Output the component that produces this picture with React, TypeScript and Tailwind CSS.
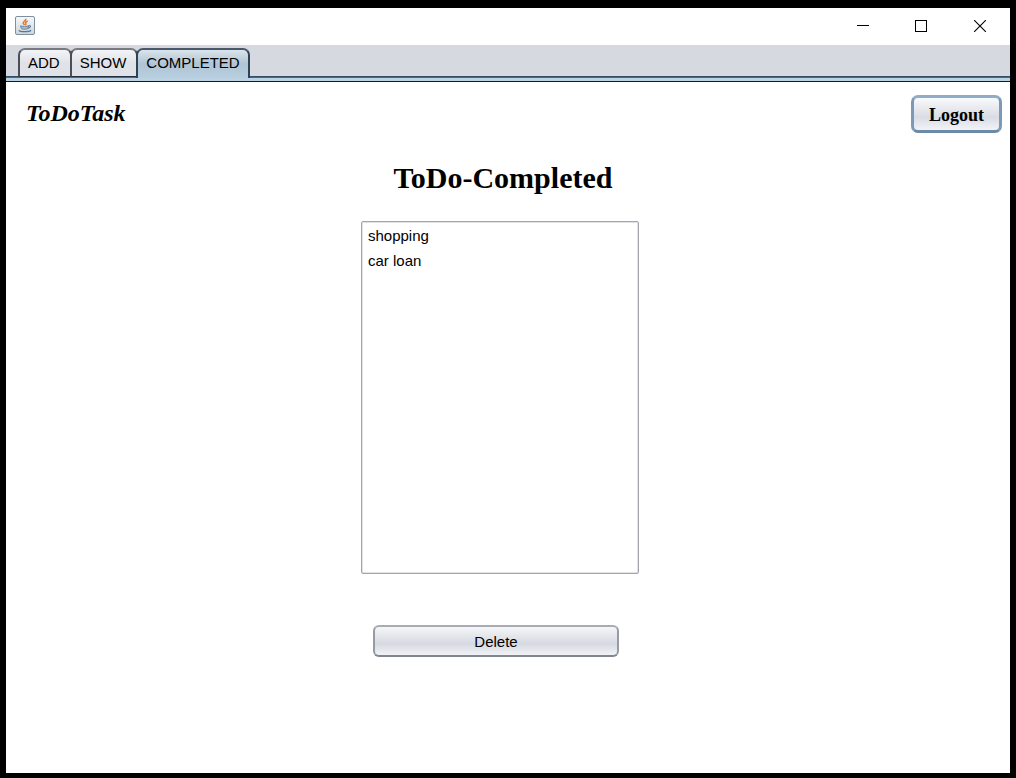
import { useState } from "react";

const tabs = ["ADD", "SHOW", "COMPLETED"];
const tasks = ["shopping", "car loan"];

function JavaIcon() {
  return (
    <svg width="20" height="19" viewBox="0 0 20 19" aria-hidden="true">
      <defs>
        <linearGradient id="tile" x1="0" y1="0" x2="0" y2="1">
          <stop offset="0" stopColor="#f7f8fa" />
          <stop offset="1" stopColor="#cfd5db" />
        </linearGradient>
      </defs>
      <rect x="0.5" y="0.5" width="19" height="18" rx="1.5" fill="url(#tile)" stroke="#7d909f" />
      <path d="M10.8 2.8c.8 1.9-3.4 2.8-2.6 4.6.3.7 1.2 1.1 1.3 1.6M12.8 5c-1.8.7-2.8 1.5-2.1 2.5.4.6.3 1.1-.3 1.6" fill="none" stroke="#e8782a" strokeWidth="1.5" />
      <path d="M5.5 9.8c1 .8 7 .8 8.2 0l-.8 2.8c-1.3.9-5.3.9-6.6 0z" fill="#a9bccd" stroke="#54799b" strokeWidth="0.8" />
      <path d="M13.5 9.5c2.8-.4 2.5 2.2-.5 2.8" fill="none" stroke="#54799b" strokeWidth="1.1" />
      <path d="M3.8 14.3c1.4 1.8 10.4 1.8 12.3 0" fill="none" stroke="#54799b" strokeWidth="1.3" />
    </svg>
  );
}

export default function App() {
  const [active, setActive] = useState("COMPLETED");

  return (
    <div className="min-h-screen flex flex-col bg-black px-[6px] pt-2 pb-[5px] text-[15px] leading-5 text-black font-['Liberation_Sans',Arial,sans-serif]">
      <header className="h-[37px] flex items-center justify-between bg-white pl-[9px] pb-[2px]">
        <JavaIcon />
        <div className="flex self-stretch pr-[1px]">
          <button aria-label="Minimize" className="w-[59px] flex items-center justify-center">
            <svg width="12" height="12" viewBox="0 0 12 12" shapeRendering="crispEdges">
              <path d="M0 5.5H12" stroke="#000" />
            </svg>
          </button>
          <button aria-label="Maximize" className="w-[58px] flex items-center justify-center">
            <svg width="12" height="12" viewBox="0 0 12 12" shapeRendering="crispEdges">
              <rect x="0.5" y="0.5" width="11" height="11" fill="none" stroke="#000" />
            </svg>
          </button>
          <button aria-label="Close" className="w-[59px] flex items-center justify-center">
            <svg width="12" height="12" viewBox="0 0 12 12">
              <path d="M0 0L12 12M12 0L0 12" stroke="#000" strokeWidth="1.1" />
            </svg>
          </button>
        </div>
      </header>

      <nav role="tablist" className="flex bg-[#d6d9e0] pl-3 pt-[3px] bg-[linear-gradient(#23415a,#5f7285)] bg-[length:100%_2px] bg-bottom bg-no-repeat">
        {tabs.map((tab) => (
          <button
            key={tab}
            role="tab"
            aria-selected={active === tab}
            onClick={() => setActive(tab)}
            className={
              active === tab
                ? "h-[30px] -mr-[2px] rounded-t-[7px] border-2 border-b-0 border-[#2c4255] border-t-[#46586a] bg-linear-to-b from-[#dbe4eb] via-[#afc4d4] to-[#b8cfe0] px-2 pb-[2px]"
                : "h-[29px] -mr-[2px] rounded-t-[7px] border-2 border-b border-[#4a4e57] border-t-[#777a82] border-b-[#23303c] bg-linear-to-b from-[#f3f4f7] via-[#e0e2e8] to-[#dfe2e9] pl-2 pr-[10px]"
            }
          >
            {tab}
          </button>
        ))}
      </nav>
      <div className="h-1 bg-[#bbd2e4] border-b border-[#0c1c2c]" />

      <main className="grow bg-white pb-10">
        <div className="flex items-start justify-between pl-5 pr-2 pt-[13px]">
          <h2 className="pt-1 text-[24px] leading-7 font-bold italic font-['Liberation_Serif','Times_New_Roman',serif]">
            ToDoTask
          </h2>
          <button className="h-[38px] w-[91px] rounded-[7px] border-3 border-[#7b9ab8] border-t-[#8eadc9] border-b-[#6c89a5] bg-linear-to-b from-[#fafafc] via-[#d9dce4] via-60% to-[#f1f3f8] pt-[2px] text-[18px] leading-6 font-bold font-['Liberation_Serif','Times_New_Roman',serif]">
            Logout
          </button>
        </div>

        <section className="flex flex-col items-center pr-4">
          <h1 className="mt-[25px] pl-[6px] text-[30px] leading-10 font-bold font-['Liberation_Serif','Times_New_Roman',serif]">
            ToDo-Completed
          </h1>
          <ul className="mt-[23px] h-[353px] w-[278px] rounded-[2px] border border-[#a3a6ad] shadow-[inset_0_0_0_1px_#e0e2e6] pl-[6px] pt-px">
            {tasks.map((task) => (
              <li key={task} className="h-[25px] leading-[25px]">
                {task}
              </li>
            ))}
          </ul>
          <button className="mt-[51px] mr-2 h-8 w-[246px] rounded-[6px] border-2 border-[#979ba4] border-t-[#a9acb4] border-b-[#80858f] bg-linear-to-b from-[#f5f6f8] via-[#d6d9e1] via-60% to-[#f1f3f8] pt-[2px]">
            Delete
          </button>
        </section>
      </main>
    </div>
  );
}
